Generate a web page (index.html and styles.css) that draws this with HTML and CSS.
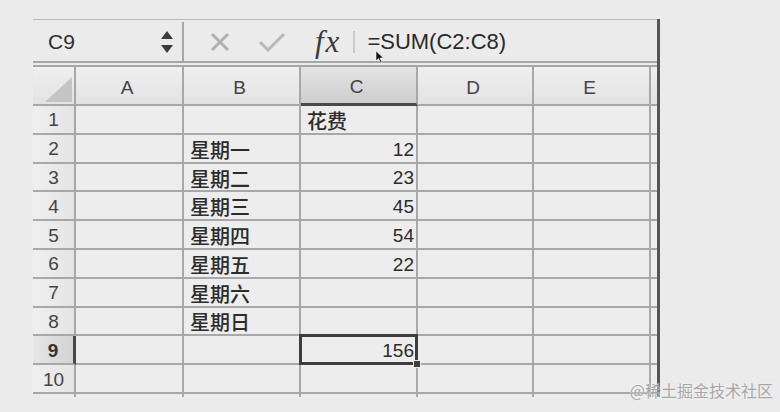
FILE: index.html
```html
<!DOCTYPE html>
<html>

<head>
    <title>Sheet</title>
    <link rel="stylesheet" href="styles.css">
</head>

<body>

    <div class="sheet">

        <div class="formula-bar">
            <div class="name-box">
                <span class="cell-ref">C9</span>
                <svg class="spinner" width="14" height="24" viewBox="0 0 14 24">
                    <polygon points="1,9 7,1 13,9" />
                    <polygon points="1,15 13,15 7,23" />
                </svg>
            </div>
            <svg class="icon-cancel" width="22" height="22" viewBox="0 0 22 22">
                <path d="M3 3 L19 19 M19 3 L3 19" />
            </svg>
            <svg class="icon-enter" width="28" height="20" viewBox="0 0 28 20">
                <path d="M2 10 L10 18 L26 2" />
            </svg>
            <span class="fx">fx</span>
            <span class="sep"></span>
            <span class="formula">=SUM(C2:C8)</span>
            <svg class="cursor" width="9" height="14" viewBox="0 0 9 14">
                <path d="M1 1 L1 11 L3.5 8.5 L5.5 13 L7 12.3 L5 8 L8.5 8 Z" />
            </svg>
        </div>

        <div class="grid">
            <div class="corner"><span class="triangle"></span></div>
            <div class="col-head">A</div>
            <div class="col-head">B</div>
            <div class="col-head active">C</div>
            <div class="col-head">D</div>
            <div class="col-head">E</div>
            <div class="col-head spare"></div>

            <div class="row-head">1</div>
            <div class="cell"></div>
            <div class="cell"></div>
            <div class="cell text">花费</div>
            <div class="cell"></div>
            <div class="cell"></div>
            <div class="cell spare"></div>

            <div class="row-head">2</div>
            <div class="cell"></div>
            <div class="cell text">星期一</div>
            <div class="cell num">12</div>
            <div class="cell"></div>
            <div class="cell"></div>
            <div class="cell spare"></div>

            <div class="row-head">3</div>
            <div class="cell"></div>
            <div class="cell text">星期二</div>
            <div class="cell num">23</div>
            <div class="cell"></div>
            <div class="cell"></div>
            <div class="cell spare"></div>

            <div class="row-head">4</div>
            <div class="cell"></div>
            <div class="cell text">星期三</div>
            <div class="cell num">45</div>
            <div class="cell"></div>
            <div class="cell"></div>
            <div class="cell spare"></div>

            <div class="row-head">5</div>
            <div class="cell"></div>
            <div class="cell text">星期四</div>
            <div class="cell num">54</div>
            <div class="cell"></div>
            <div class="cell"></div>
            <div class="cell spare"></div>

            <div class="row-head">6</div>
            <div class="cell"></div>
            <div class="cell text">星期五</div>
            <div class="cell num">22</div>
            <div class="cell"></div>
            <div class="cell"></div>
            <div class="cell spare"></div>

            <div class="row-head">7</div>
            <div class="cell"></div>
            <div class="cell text">星期六</div>
            <div class="cell"></div>
            <div class="cell"></div>
            <div class="cell"></div>
            <div class="cell spare"></div>

            <div class="row-head">8</div>
            <div class="cell"></div>
            <div class="cell text">星期日</div>
            <div class="cell"></div>
            <div class="cell"></div>
            <div class="cell"></div>
            <div class="cell spare"></div>

            <div class="row-head active">9</div>
            <div class="cell"></div>
            <div class="cell"></div>
            <div class="cell num selected">156<span class="handle"></span></div>
            <div class="cell"></div>
            <div class="cell"></div>
            <div class="cell spare"></div>

            <div class="row-head">10</div>
            <div class="cell"></div>
            <div class="cell"></div>
            <div class="cell"></div>
            <div class="cell"></div>
            <div class="cell"></div>
            <div class="cell spare"></div>

            <div class="stub"></div>
            <div class="stub"></div>
            <div class="stub"></div>
            <div class="stub"></div>
            <div class="stub"></div>
            <div class="stub"></div>
            <div class="stub spare"></div>
        </div>

    </div>

    <div class="watermark">@稀土掘金技术社区</div>

</body>

</html>
```

FILE: styles.css
```css
* {
    box-sizing: border-box;
}

body {
    margin: 0;
    height: 412px;
    overflow: hidden;
    background-color: #ebebeb;
    font-family: "Liberation Sans", "Noto Sans CJK SC", sans-serif;
    color: #333;
    position: relative;
}

.sheet {
    margin: 19px 0 0 33px;
    width: 627px;
    border-right: 3px solid #555;
}

/* formula bar */

.formula-bar {
    position: relative;
    display: flex;
    align-items: center;
    height: 48px;
    padding-top: 2px;
    border-top: 1px solid #b8b8b8;
    border-bottom: 6px double #a6a6a6;
}

.name-box {
    display: flex;
    align-items: center;
    width: 151px;
    height: 100%;
    padding: 0 8px 0 15px;
    border-right: 2px solid #a8a8a8;
}

.cell-ref {
    font-size: 21px;
    color: #2e2e2e;
}

.spinner {
    margin-left: auto;
    fill: #3c3c3c;
}

.icon-cancel {
    margin-left: 25px;
    fill: none;
    stroke: #afafaf;
    stroke-width: 3;
}

.icon-enter {
    margin-left: 27px;
    fill: none;
    stroke: #b9b9b9;
    stroke-width: 3;
}

.fx {
    margin-left: 29px;
    font-family: "Liberation Serif", serif;
    font-style: italic;
    font-size: 31px;
    letter-spacing: 2px;
    color: #3a3a3a;
    line-height: 1;
}

.sep {
    margin-left: 12px;
    width: 2px;
    height: 22px;
    background-color: #c9c9c9;
}

.formula {
    margin-left: 12px;
    font-size: 22px;
    color: #2a2a2a;
}

.cursor {
    position: absolute;
    left: 342px;
    top: 30px;
    fill: #111;
    stroke: #fff;
    stroke-width: 0.6;
}

/* grid */

.grid {
    display: grid;
    grid-template-columns: 43px 108px 117px 117px 116px 117px 6px;
    grid-template-rows: 39px repeat(10, 28.8px) 3px;
}

.grid > div {
    border-right: 2px solid #a8a8a8;
    border-bottom: 2px solid #a8a8a8;
    display: flex;
    align-items: center;
    overflow: visible;
}

.grid > .spare {
    border-right: none;
}

.grid > .stub {
    border-bottom: none;
}

.corner {
    position: relative;
    background-image: linear-gradient(#efefef, #e3e3e3);
}

.triangle {
    position: absolute;
    left: 12px;
    bottom: 2px;
    width: 0;
    height: 0;
    border-left: 27px solid transparent;
    border-bottom: 25px solid #c5c5c5;
}

.col-head {
    justify-content: center;
    padding: 4px 4px 0 0;
    font-size: 19px;
    color: #444;
    background-image: linear-gradient(#efefef, #e3e3e3);
}

.col-head.active {
    background-image: linear-gradient(#e4e4e4, #cdcdcd);
    border-bottom: 3px solid #4a4a4a;
}

.row-head {
    justify-content: center;
    padding-top: 2px;
    font-size: 19px;
    color: #444;
    background-image: linear-gradient(90deg, #efefef, #e5e5e5);
}

.row-head.active {
    background-image: linear-gradient(90deg, #e6e6e6, #d3d3d3);
    border-right: 3px solid #4a4a4a;
    font-weight: bold;
    color: #333;
}

.cell {
    position: relative;
    background-color: #ededed;
    font-size: 19px;
    color: #2c2c2c;
}

.cell.text {
    padding: 2px 0 0 6px;
    font-size: 20px;
    font-weight: 500;
}

.cell.num {
    justify-content: flex-end;
    padding: 3px 2px 0 0;
}

.cell.selected::after {
    content: "";
    position: absolute;
    left: -2px;
    top: -2px;
    right: -2px;
    bottom: -2px;
    border: 3px solid #3e3e3e;
}

.handle {
    position: absolute;
    right: -5px;
    bottom: -5px;
    width: 8px;
    height: 8px;
    background-color: #3e3e3e;
    border: 1px solid #ededed;
    z-index: 1;
}

.watermark {
    position: absolute;
    right: 7px;
    bottom: 10px;
    font-family: "Noto Sans CJK SC", sans-serif;
    font-size: 16px;
    color: #a6a6a6;
    text-shadow: 0 0 2px #fff;
}
```
